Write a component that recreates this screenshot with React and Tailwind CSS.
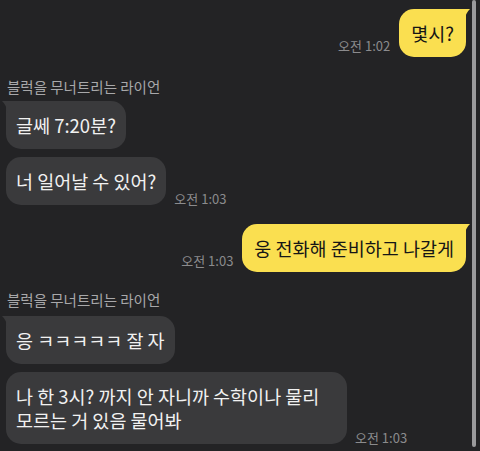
import React from 'react';

const font = { fontFamily: '"Noto Sans CJK KR", "Noto Sans", sans-serif' };

const Time = ({ children, mine }) => (
    <span className={`text-[13px] leading-[14px] text-[#8b8b8d] whitespace-nowrap ${mine ? 'pb-[4px]' : 'mb-[-1px]'}`}>
        {children}
    </span>
);

const MyBubble = ({ children }) => (
    <div className="relative bg-[#fadf50] text-[#161616] text-[18.5px] leading-6 px-[12px] py-3 rounded-[15px] rounded-tr-[4px] break-keep">
        <svg className="absolute -right-[4px] top-0" width="10" height="12" viewBox="0 0 10 12">
            <path d="M0 0 H10 Q6 3 4.5 12 H0 Z" fill="#fadf50" />
        </svg>
        {children}
    </div>
);

const TheirBubble = ({ children, tail }) => (
    <div className={`relative bg-[#3a3a3c] text-[#f1f1f1] text-[18.5px] leading-6 px-[10px] py-3 rounded-[15px] max-w-[341px] break-keep ${tail ? 'rounded-tl-[4px]' : ''}`}>
        {tail && (
            <svg className="absolute -left-[4px] top-0" width="10" height="12" viewBox="0 0 10 12">
                <path d="M10 0 H0 Q4 3 5.5 12 H10 Z" fill="#3a3a3c" />
            </svg>
        )}
        {children}
    </div>
);

const Mine = ({ text, time, className }) => (
    <div className={`flex justify-end items-end gap-[9px] pr-[14px] ${className || ''}`}>
        <Time mine>{time}</Time>
        <MyBubble>{text}</MyBubble>
    </div>
);

const Theirs = ({ text, time, tail, className }) => (
    <div className={`flex items-end gap-[8px] pl-[6px] ${className || ''}`}>
        <TheirBubble tail={tail}>{text}</TheirBubble>
        {time && <Time>{time}</Time>}
    </div>
);

const Name = ({ className }) => (
    <div className={`pl-[7px] text-[14.5px] leading-4 text-[#a8a8aa] ${className || ''}`}>블럭을 무너트리는 라이언</div>
);

export default function App() {
    return (
        <div className="relative w-[480px] h-[451px] overflow-hidden bg-[#232325]" style={font}>
            <div className="flex flex-col pt-[9px]">
                <Mine text="몇시?" time="오전 1:02" />
                <Name className="mt-[22px]" />
                <Theirs tail text="글쎄 7:20분?" className="mt-[6px]" />
                <Theirs text="너 일어날 수 있어?" time="오전 1:03" className="mt-2" />
                <Mine text="웅 전화해 준비하고 나갈게" time="오전 1:03" className="mt-[19px]" />
                <Name className="mt-[20px]" />
                <Theirs tail text="응 ㅋㅋㅋㅋㅋ 잘 자" className="mt-2" />
                <Theirs text="나 한 3시? 까지 안 자니까 수학이나 물리 모르는 거 있음 물어봐" time="오전 1:03" className="mt-2" />
            </div>
            {/* scroll indicator */}
            <div className="absolute right-[4px] top-0 w-[4px] h-[447px] rounded-full bg-[#9a9a9c]" />
        </div>
    );
}
